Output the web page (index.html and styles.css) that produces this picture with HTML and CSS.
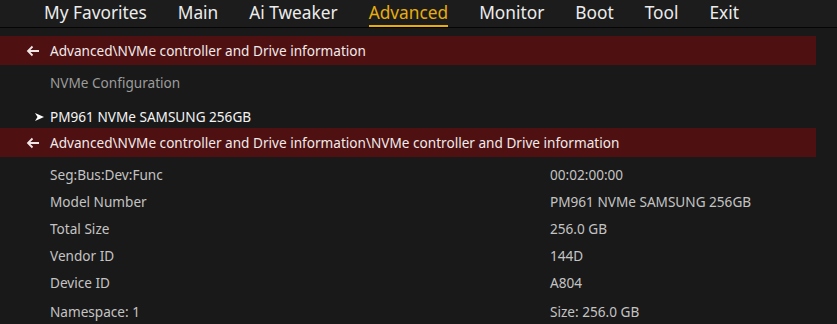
FILE: index.html
```html
<!DOCTYPE html>
<html lang="en">
<head>
    <meta charset="UTF-8">
    <title>Advanced</title>
    <link rel="stylesheet" href="styles.css">
</head>
<body>

    <div class="nav">
        <span class="tab">My Favorites</span>
        <span class="tab">Main</span>
        <span class="tab">Ai Tweaker</span>
        <span class="tab active">Advanced</span>
        <span class="tab">Monitor</span>
        <span class="tab">Boot</span>
        <span class="tab">Tool</span>
        <span class="tab">Exit</span>
    </div>

    <div class="content">
        <div class="crumb">
            <svg class="back" width="14" height="12" viewBox="0 0 14 12">
                <path d="M13 6H2M6.5 1.5L2 6l4.5 4.5" fill="none" stroke="#f0e6e6" stroke-width="1.8"/>
            </svg>
            <span>Advanced\NVMe controller and Drive information</span>
        </div>

        <div class="section-title">NVMe Configuration</div>
        <div class="sub-link">
            <svg class="pointer" width="9" height="8" viewBox="0 0 9 8">
                <path d="M0 0L9 4L0 8L2.5 4Z" fill="#ffffff"/>
            </svg>
            <span>PM961 NVMe SAMSUNG 256GB</span>
        </div>

        <div class="crumb">
            <svg class="back" width="14" height="12" viewBox="0 0 14 12">
                <path d="M13 6H2M6.5 1.5L2 6l4.5 4.5" fill="none" stroke="#f0e6e6" stroke-width="1.8"/>
            </svg>
            <span>Advanced\NVMe controller and Drive information\NVMe controller and Drive information</span>
        </div>

        <div class="info">
            <div class="row"><span>Seg:Bus:Dev:Func</span><span>00:02:00:00</span></div>
            <div class="row"><span>Model Number</span><span>PM961 NVMe SAMSUNG 256GB</span></div>
            <div class="row"><span>Total Size</span><span>256.0 GB</span></div>
            <div class="row"><span>Vendor ID</span><span>144D</span></div>
            <div class="row"><span>Device ID</span><span>A804</span></div>
            <div class="row ns"><span>Namespace: 1</span><span>Size: 256.0 GB</span></div>
        </div>
    </div>

</body>
</html>
```

FILE: styles.css
```css
body {
    margin: 0;
    background-color: #191919;
    font-family: "Noto Sans", "Open Sans", sans-serif;
    color: #c4c4c4;
    overflow: hidden;
}
.nav {
    height: 27px;
    background-color: #1c1c1c;
    border-bottom: 1px solid #050505;
    display: flex;
    gap: 31px;
    padding-left: 44px;
    font-size: 17.3px;
    line-height: 26px;
    color: #ececec;
}
.tab {
    position: relative;
}
.tab.active {
    color: #e8ad0c;
}
.tab.active::after {
    content: "";
    position: absolute;
    left: 0;
    right: 0;
    bottom: 0;
    height: 2px;
    background-color: #e8ad0c;
}
.content {
    padding-top: 8px;
    font-size: 13.6px;
}
.crumb {
    width: 816px;
    height: 29px;
    background-color: #4e1011;
    display: flex;
    align-items: center;
    color: #f2eaea;
    padding-left: 26px;
    box-sizing: border-box;
}
.back {
    margin-right: 10px;
}
.section-title {
    height: 36px;
    line-height: 36px;
    padding-left: 50px;
    color: #9c9c9c;
}
.sub-link {
    height: 27px;
    box-sizing: border-box;
    padding-top: 5px;
    line-height: 22px;
    display: flex;
    align-items: center;
    color: #f4f4f4;
}
.pointer {
    margin-left: 35px;
    margin-right: 6px;
}
.info {
    padding-top: 4px;
}
.row {
    display: grid;
    grid-template-columns: 500px 1fr;
    padding-left: 50px;
    height: 27px;
    line-height: 27px;
}
.row.ns {
    padding-top: 2px;
}
```
